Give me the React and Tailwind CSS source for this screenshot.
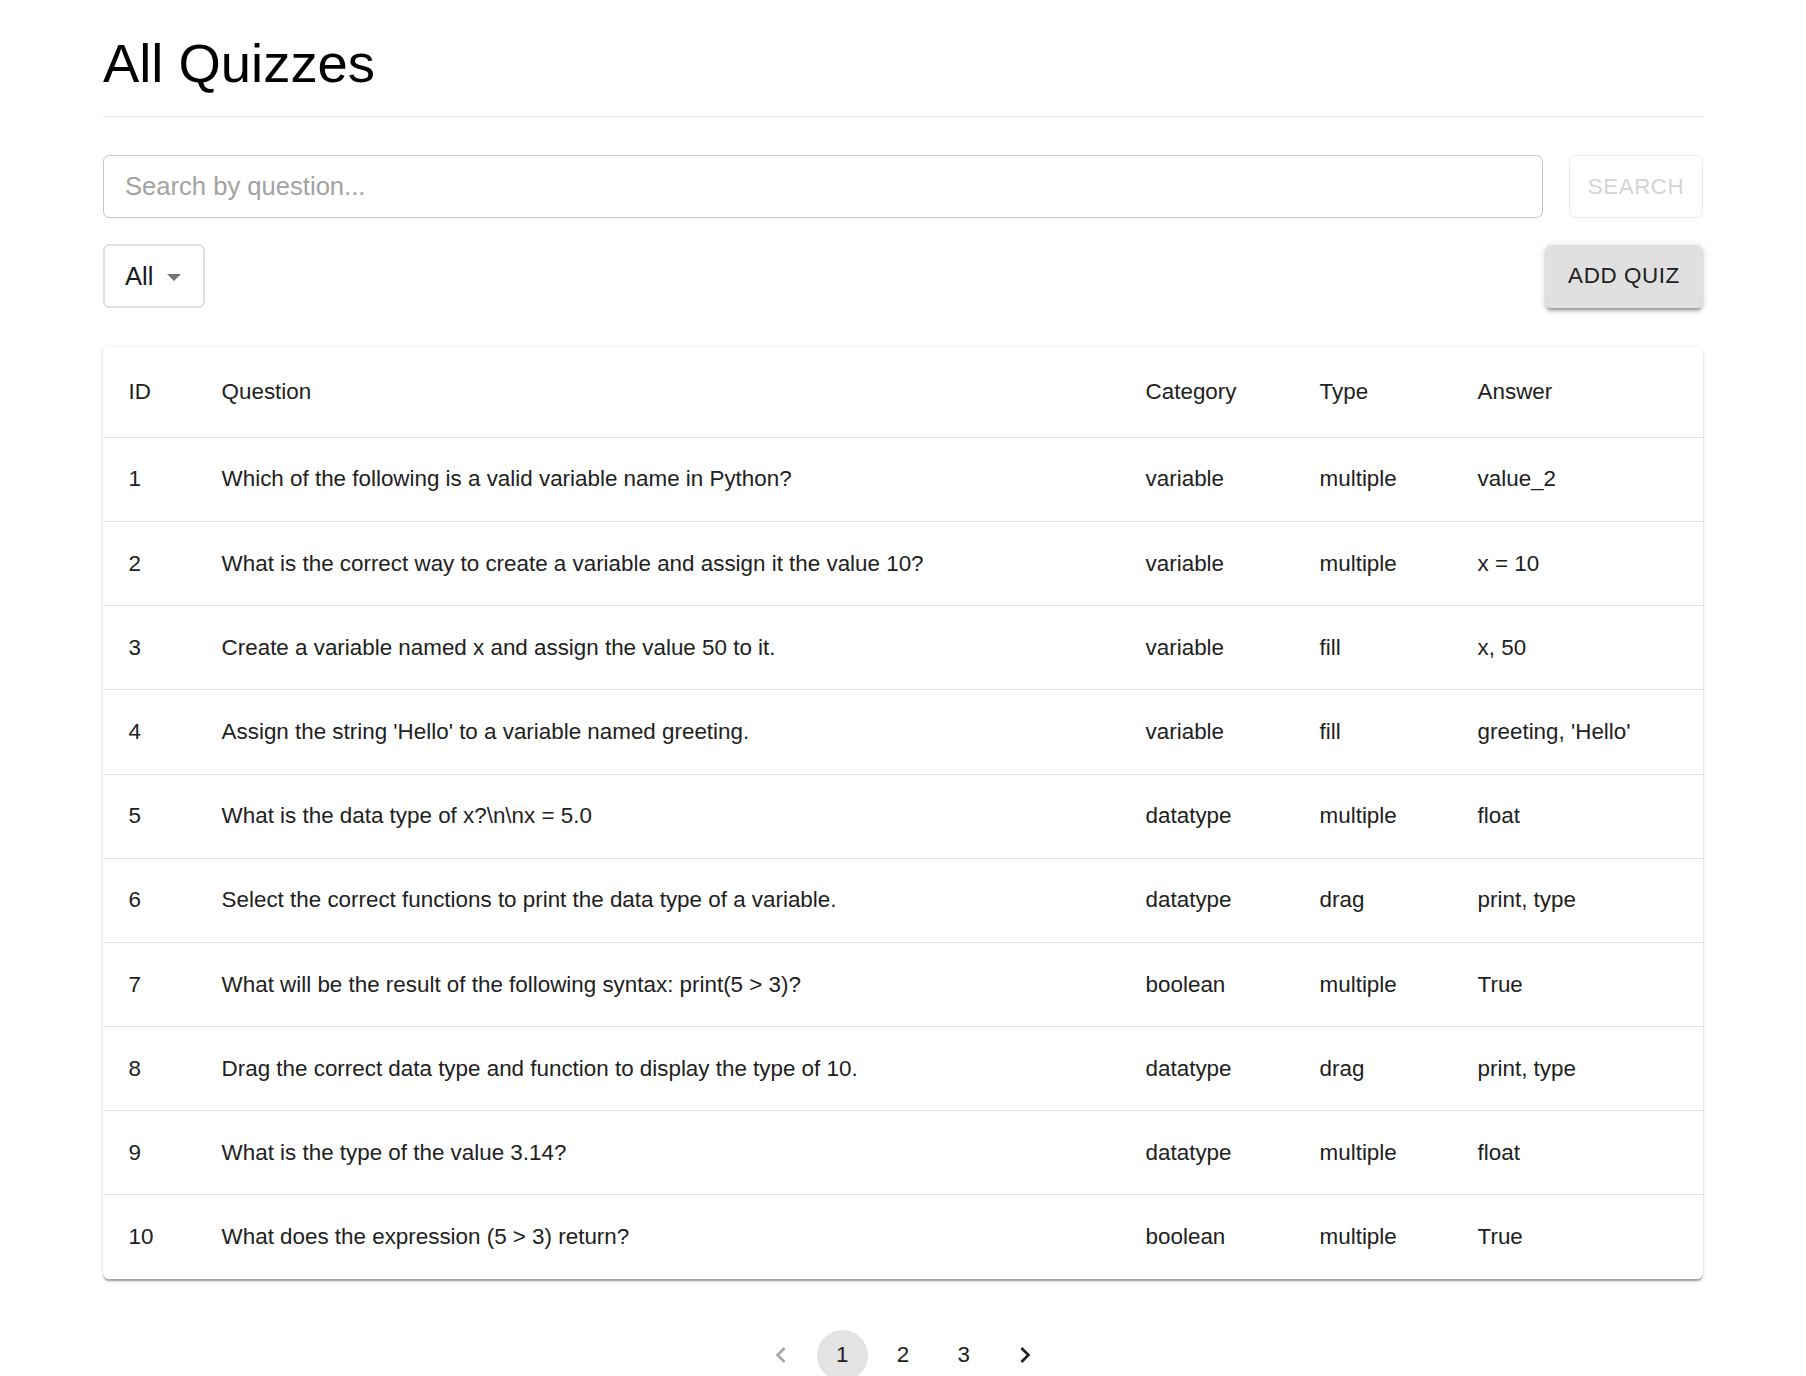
import React from 'react';

const quizzes = [
  { id: 1, question: 'Which of the following is a valid variable name in Python?', category: 'variable', type: 'multiple', answer: 'value_2' },
  { id: 2, question: 'What is the correct way to create a variable and assign it the value 10?', category: 'variable', type: 'multiple', answer: 'x = 10' },
  { id: 3, question: 'Create a variable named x and assign the value 50 to it.', category: 'variable', type: 'fill', answer: 'x, 50' },
  { id: 4, question: "Assign the string 'Hello' to a variable named greeting.", category: 'variable', type: 'fill', answer: "greeting, 'Hello'" },
  { id: 5, question: 'What is the data type of x?\\n\\nx = 5.0', category: 'datatype', type: 'multiple', answer: 'float' },
  { id: 6, question: 'Select the correct functions to print the data type of a variable.', category: 'datatype', type: 'drag', answer: 'print, type' },
  { id: 7, question: 'What will be the result of the following syntax: print(5 > 3)?', category: 'boolean', type: 'multiple', answer: 'True' },
  { id: 8, question: 'Drag the correct data type and function to display the type of 10.', category: 'datatype', type: 'drag', answer: 'print, type' },
  { id: 9, question: 'What is the type of the value 3.14?', category: 'datatype', type: 'multiple', answer: 'float' },
  { id: 10, question: 'What does the expression (5 > 3) return?', category: 'boolean', type: 'multiple', answer: 'True' },
];

const headCell = 'text-left font-normal px-[25.6px] py-[25.6px] leading-[38.4px] border-b border-[#e0e0e0]';
const bodyCell = 'px-[25.6px] py-[25.6px] leading-[32px] border-b border-[#e0e0e0]';
const lastCell = 'px-[25.6px] py-[25.6px] leading-[32px]';

const App = () => {
  return (
    <div className="min-h-screen bg-white text-[#212121] font-[family-name:'Liberation_Sans',Arial,sans-serif]">
      <div className="w-[1600px] mx-auto pt-[30px]">
        <h1 className="text-[54.4px] leading-[67.2px] font-normal text-black">All Quizzes</h1>
        <div className="mt-[19px] h-px bg-[#e0e0e0]" />

        {/* search */}
        <div className="mt-[38px] flex gap-[26px]">
          <input
            type="text"
            placeholder="Search by question..."
            className="flex-1 h-[63px] rounded-[6.4px] border border-[#c4c4c4] px-[21px] text-[25.6px] outline-none placeholder:text-[#a2a2a2]"
          />
          <button className="w-[134px] h-[63px] rounded-[6.4px] border border-[#ebebeb] text-[22.4px] uppercase tracking-[0.5px] text-[#d4d4d4]">
            Search
          </button>
        </div>

        {/* filter + add */}
        <div className="mt-[26px] flex items-center justify-between">
          <div className="w-[102px] h-[64px] rounded-[6.4px] border-2 border-[#e0e0e0] flex items-center pl-[20px] gap-[14px]">
            <span className="text-[25.6px] text-[#1a1a1a]">All</span>
            <svg width="14" height="7" viewBox="0 0 14 7" className="mt-[2px]">
              <path d="M0 0h14L7 7z" fill="#757575" />
            </svg>
          </div>
          <button className="w-[158px] h-[63px] rounded-[6.4px] bg-[#e0e0e0] text-[22.4px] uppercase tracking-[0.6px] text-[#212121] shadow-[0_4.8px_1.6px_-3.2px_rgba(0,0,0,0.2),0_3.2px_3.2px_0_rgba(0,0,0,0.14),0_1.6px_8px_0_rgba(0,0,0,0.12)]">
            Add Quiz
          </button>
        </div>

        {/* table */}
        <div className="mt-[39px] rounded-[6.4px] bg-white overflow-hidden shadow-[0_3.2px_1.6px_-1.6px_rgba(0,0,0,0.2),0_1.6px_1.6px_0_rgba(0,0,0,0.14),0_1.6px_4.8px_0_rgba(0,0,0,0.12)]">
          <table className="w-full table-fixed border-collapse text-[22.4px]">
            <colgroup>
              <col className="w-[93px]" />
              <col className="w-[924px]" />
              <col className="w-[174px]" />
              <col className="w-[158px]" />
              <col />
            </colgroup>
            <thead>
              <tr>
                <th className={headCell}>ID</th>
                <th className={headCell}>Question</th>
                <th className={headCell}>Category</th>
                <th className={headCell}>Type</th>
                <th className={headCell}>Answer</th>
              </tr>
            </thead>
            <tbody>
              {quizzes.map((q, i) => {
                const cell = i === quizzes.length - 1 ? lastCell : bodyCell;
                return (
                  <tr key={q.id}>
                    <td className={cell}>{q.id}</td>
                    <td className={cell}>{q.question}</td>
                    <td className={cell}>{q.category}</td>
                    <td className={cell}>{q.type}</td>
                    <td className={cell}>{q.answer}</td>
                  </tr>
                );
              })}
            </tbody>
          </table>
        </div>

        {/* pagination */}
        <div className="mt-[51px] flex justify-center text-[22.4px]">
          <div className="w-[51.2px] h-[51.2px] mx-[4.8px] flex items-center justify-center">
            <svg width="32" height="32" viewBox="0 0 24 24">
              <path d="M15.41 7.41 14 6l-6 6 6 6 1.41-1.41L10.83 12z" fill="#a8a8a8" />
            </svg>
          </div>
          <div className="w-[51.2px] h-[51.2px] mx-[4.8px] rounded-full bg-[#e3e3e3] flex items-center justify-center">1</div>
          <div className="w-[51.2px] h-[51.2px] mx-[4.8px] flex items-center justify-center">2</div>
          <div className="w-[51.2px] h-[51.2px] mx-[4.8px] flex items-center justify-center">3</div>
          <div className="w-[51.2px] h-[51.2px] mx-[4.8px] flex items-center justify-center">
            <svg width="32" height="32" viewBox="0 0 24 24">
              <path d="M10 6 8.59 7.41 13.17 12l-4.58 4.59L10 18l6-6z" fill="#212121" />
            </svg>
          </div>
        </div>
      </div>
    </div>
  );
};

export default App;
